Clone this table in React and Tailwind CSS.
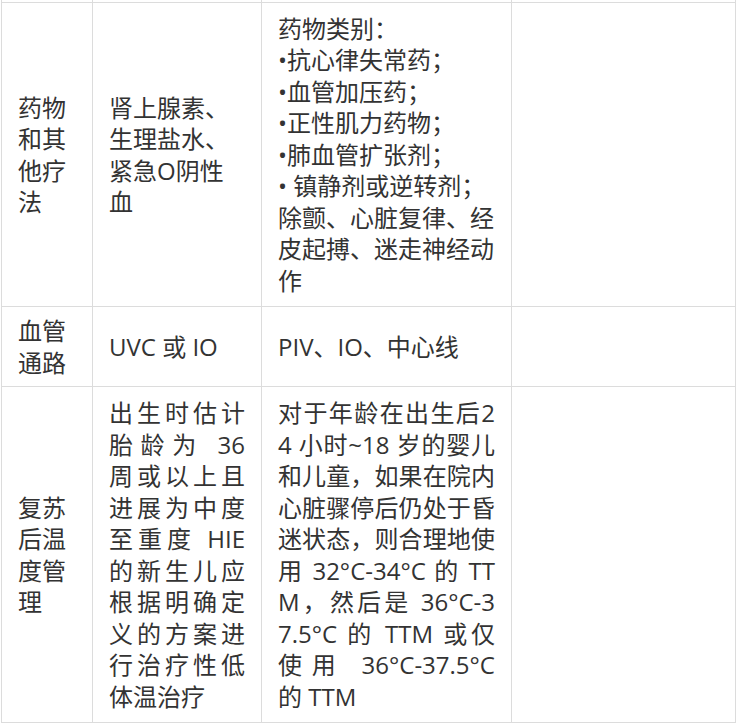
import React from 'react'

const cell = 'border border-[#dcdcdc] px-4 py-2 align-middle'

// 两端对齐的多行文字，最后一行不拉伸
function Lines({ lines }) {
  return lines.map((line, i) => (
    <span
      key={i}
      className={i < lines.length - 1 ? 'block text-justify [text-align-last:justify]' : 'block text-left'}
    >
      {line}
    </span>
  ))
}

const hieLines = [
  '出生时估计',
  '胎龄为 36',
  '周或以上且',
  '进展为中度',
  '至重度 HIE',
  '的新生儿应',
  '根据明确定',
  '义的方案进',
  '行治疗性低',
  '体温治疗',
]

const ttmLines = [
  '对于年龄在出生后2',
  '4 小时~18 岁的婴儿',
  '和儿童，如果在院内',
  '心脏骤停后仍处于昏',
  '迷状态，则合理地使',
  '用 32°C-34°C 的 TT',
  'M，然后是 36°C-3',
  '7.5°C 的 TTM 或仅',
  '使用 36°C-37.5°C',
  '的 TTM',
]

export default function App() {
  return (
    <div className="h-[727px] w-[744px] overflow-hidden bg-white pl-px">
      <table
        className="-mt-[8px] w-[734px] table-fixed border-collapse text-[24px] leading-[31.5px] text-[#333]"
        style={{ fontFamily: '"Open Sans", "Noto Sans CJK SC", sans-serif' }}
      >
        <colgroup>
          <col className="w-[91px]" />
          <col className="w-[169px]" />
          <col className="w-[250px]" />
          <col className="w-[224px]" />
        </colgroup>
        <tbody>
          {/* 上一行只露出一点 */}
          <tr className="h-[10px]">
            <td className="border border-[#dcdcdc] p-0"></td>
            <td className="border border-[#dcdcdc] p-0"></td>
            <td className="border border-[#dcdcdc] p-0"></td>
            <td className="border border-[#dcdcdc] p-0"></td>
          </tr>
          <tr className="h-[304px]">
            <td className={cell}>药物和其他疗法</td>
            <td className={cell}>
              肾上腺素、<br />
              生理盐水、<br />
              紧急O阴性血
            </td>
            <td className={cell}>
              药物类别：<br />
              •抗心律失常药；<br />
              •血管加压药；<br />
              •正性肌力药物；<br />
              •肺血管扩张剂；<br />
              • 镇静剂或逆转剂；<br />
              除颤、心脏复律、经皮起搏、迷走神经动作
            </td>
            <td className={cell}></td>
          </tr>
          <tr className="h-[80px]">
            <td className={cell}>血管通路</td>
            <td className={cell}>UVC 或 IO</td>
            <td className={cell}>PIV、IO、中心线</td>
            <td className={cell}></td>
          </tr>
          <tr className="h-[336px]">
            <td className={cell}>复苏后温度管理</td>
            <td className={cell}>
              <Lines lines={hieLines} />
            </td>
            <td className={cell}>
              <Lines lines={ttmLines} />
            </td>
            <td className={cell}></td>
          </tr>
        </tbody>
      </table>
    </div>
  )
}
